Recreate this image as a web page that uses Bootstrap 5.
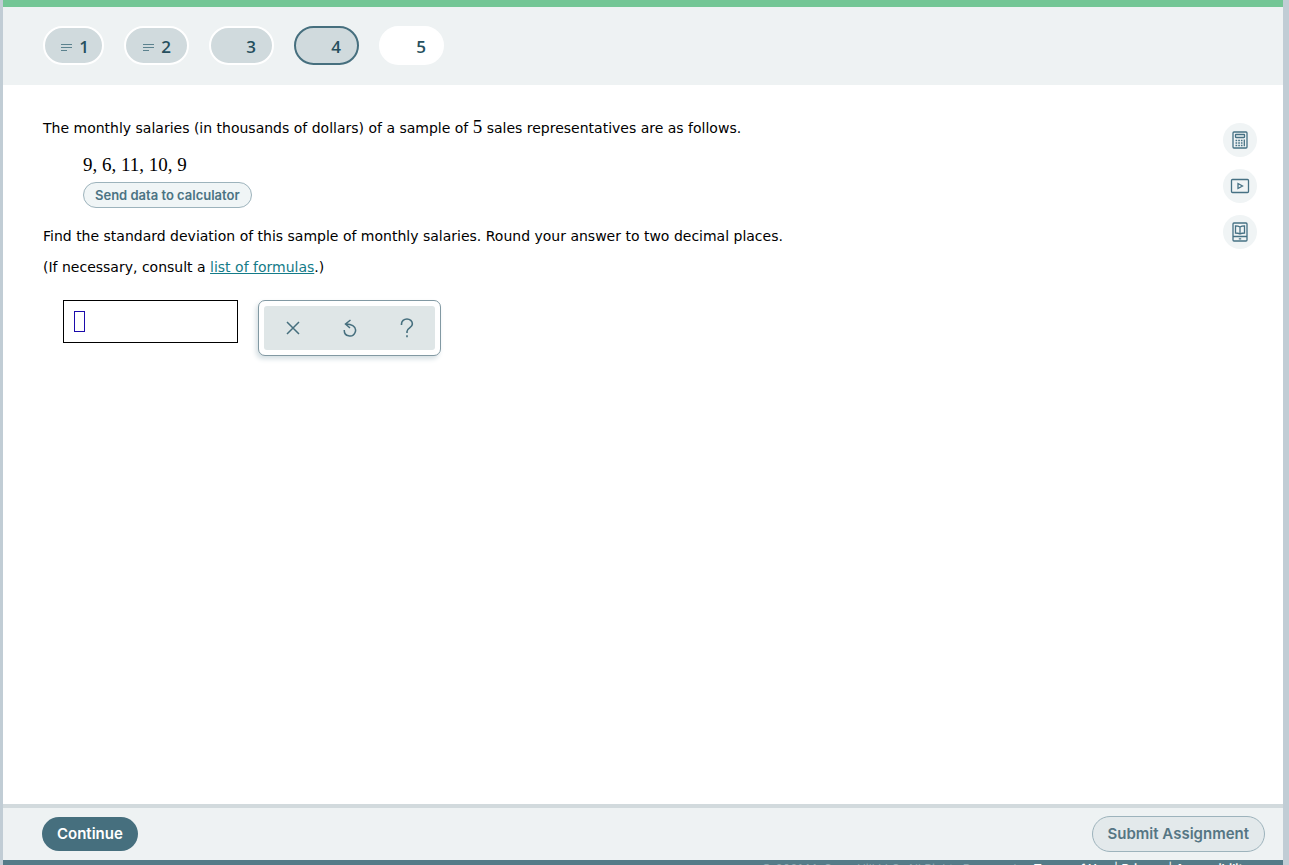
<!DOCTYPE html>
<html lang="en">
<head>
<meta charset="utf-8">
<meta name="viewport" content="width=device-width, initial-scale=1">
<title>Assignment – Question 4</title>
<link href="https://cdn.jsdelivr.net/npm/bootstrap@5.3.0/dist/css/bootstrap.min.css" rel="stylesheet">
<style>
  :root { --slate: #466f7e; --mist: #eef2f3; --frame: #c1cdd5; }
  body { font-family: "DejaVu Sans", sans-serif; font-size: 14px; line-height: 20px; color: #000; background: #fff; }
  .app-frame { border-left: 3px solid var(--frame); border-right: 6px solid var(--frame); }
  .progress-line { height: 7px; background: #73c695; }
  .question-bar { background: var(--mist); padding: 19px 40px 20px; gap: 20px; }
  .ui-font { font-family: Inter, sans-serif; }
  .question-pill { width: 65px; height: 39px; padding: 2px 16px 0 0; border: 2px solid #fff; border-radius: 20px; background: #d0dadd; color: #264f5e; font-family: "Open Sans", sans-serif; font-size: 17px; font-weight: 600; line-height: 20px; }
  .question-pill.first-pill { width: 61px; padding-right: 13px; }
  .question-pill.current { border-color: var(--slate); }
  .question-pill.unseen { background: #fff; }
  .question-pill svg { margin-right: 7px; }
  .question-area { padding: 32px 26px 0 40px; }
  .math { font-family: "Liberation Serif", serif; font-size: 19px; line-height: 20px; }
  .data-block { padding: 17px 0 18px 40px; }
  .send-btn { --bs-btn-padding-y: 0; --bs-btn-padding-x: 11px; height: 26px; margin-top: 7px; border: 1px solid #9db3bc; border-radius: 13px; background: #f0f5f6; color: #4b7383; font-size: 13px; font-weight: 600; line-height: 20px; }
  .formula-line { margin: 11px 0 0; }
  .formula-link { color: #147b88; }
  .answer-row { padding: 23px 0 0 20px; gap: 20px; }
  .answer-input { width: 175px; height: 43px; border: 1px solid #000; border-radius: 0; padding: 0 26px; }
  .answer-slot { left: 11px; top: 11px; width: 11px; height: 21px; border: 1px solid #1b0bab; pointer-events: none; }
  .tool-panel { padding: 5px; border: 1px solid #8299a3; border-radius: 7px; background: #fff; box-shadow: -2px 3px 5px #d5dfe3; }
  .tool-strip { background: #dfe6e7; border-radius: 3px; }
  .tool-btn { width: 57px; height: 44px; padding: 0; border: 0; background: transparent; color: var(--slate); }
  .side-tools { padding-top: 6px; gap: 12px; }
  .side-btn { width: 34px; height: 34px; padding: 0; border: 0; border-radius: 50%; background: #f0f4f5; color: #467184; }
  .action-bar { border-top: 4px solid #d2dadd; background: var(--mist); padding: 8px 18px 8px 39px; }
  .main-btn { height: 34px; padding: 0 15px; border: 0; border-radius: 17px; background: var(--slate); color: #fff; font-size: 15px; font-weight: 600; line-height: 20px; }
  .submit-btn { height: 36px; padding: 0 15px; border: 1px solid #9db3bc; border-radius: 18px; background: #e3e9eb; color: #557684; font-size: 15px; font-weight: 600; line-height: 20px; }
  .legal-bar { height: 5px; background: #547b88; color: #8ba8b1; font-size: 12px; line-height: 16px; padding: 1px 33px 0 0; gap: 14px; }
  .legal-bar a { color: #fff; font-weight: 600; text-decoration: none; }
</style>
</head>
<body>
<div class="app-frame vh-100 d-flex flex-column overflow-hidden">
  <div class="progress-line flex-shrink-0"></div>
  <nav class="question-bar d-flex flex-shrink-0" aria-label="Questions">
    <button type="button" class="question-pill first-pill d-flex align-items-center justify-content-end"><svg width="11" height="8" viewBox="0 0 11 8" stroke="#5b828e" aria-hidden="true"><path d="M0 1.500h11M0 4.500h11M0 7.500h6"/></svg>1</button>
    <button type="button" class="question-pill d-flex align-items-center justify-content-end"><svg width="11" height="8" viewBox="0 0 11 8" stroke="#5b828e" aria-hidden="true"><path d="M0 1.500h11M0 4.500h11M0 7.500h6"/></svg>2</button>
    <button type="button" class="question-pill d-flex align-items-center justify-content-end">3</button>
    <button type="button" class="question-pill current d-flex align-items-center justify-content-end" aria-current="true">4</button>
    <button type="button" class="question-pill unseen d-flex align-items-center justify-content-end">5</button>
  </nav>

  <main class="question-area d-flex justify-content-between flex-grow-1">
    <div>
      <p class="mb-0">The monthly salaries (in thousands of dollars) of a sample of <span class="math">5</span> sales representatives are as follows.</p>
      <div class="data-block">
        <div class="math">9, 6, 11, 10, 9</div>
        <button type="button" class="btn send-btn ui-font d-flex align-items-center">Send data to calculator</button>
      </div>
      <p class="mb-0">Find the standard deviation of this sample of monthly salaries. Round your answer to two decimal places.</p>
      <p class="formula-line">(If necessary, consult a <a href="#" class="formula-link">list of formulas</a>.)</p>
      <div class="answer-row d-flex align-items-start">
        <div class="position-relative">
          <input type="text" class="answer-input d-block" aria-label="Answer">
          <span class="answer-slot position-absolute"></span>
        </div>
        <div class="tool-panel">
          <div class="tool-strip d-flex">
            <button type="button" class="tool-btn d-flex align-items-center justify-content-center" aria-label="Clear"><svg width="14" height="14" viewBox="0 0 14 14" fill="none" stroke="currentColor" stroke-width="1.500"><path d="M1 1l12 12M13 1L1 13"/></svg></button>
            <button type="button" class="tool-btn d-flex align-items-center justify-content-center" aria-label="Undo"><svg width="16" height="18" viewBox="0 0 16 18" fill="none" stroke="currentColor" stroke-width="1.500"><path d="M8.500 1L3.500 5l4.500 4M4 5c3.500.2 5 .6 6.800 1.600A5.600 5.600 0 1 1 2.300 11"/></svg></button>
            <button type="button" class="tool-btn d-flex align-items-center justify-content-center" aria-label="Help"><svg width="14" height="20" viewBox="0 0 14 20" fill="none" stroke="currentColor" stroke-width="1.600"><path d="M1.500 7V6a5.400 5 0 0 1 10.900 0c0 4-5.400 3.700-5.400 7.500v1.500M7 17.200v2"/></svg></button>
          </div>
        </div>
      </div>
    </div>
    <aside class="side-tools d-flex flex-column" aria-label="Tools">
      <button type="button" class="side-btn d-flex align-items-center justify-content-center" aria-label="Calculator"><svg width="16" height="18" viewBox="0 0 16 18" fill="none" stroke="currentColor" stroke-width="1.300"><rect x="1" y="1" width="14" height="16" rx="1"/><rect x="3.500" y="3.500" width="9" height="3" rx=".5"/><path d="M3.500 9.500h7M3.500 12h7M3.500 14.500h7" stroke-width="1.500" stroke-dasharray="1.700 1"/><path d="M12.300 8.500v6.700"/></svg></button>
      <button type="button" class="side-btn d-flex align-items-center justify-content-center" aria-label="Video"><svg width="20" height="16" viewBox="0 0 20 16" fill="none" stroke="currentColor" stroke-width="1.300"><rect x="1.500" y="1.500" width="17" height="13" rx="1"/><path d="M8 5.500v5L12.500 8z"/></svg></button>
      <button type="button" class="side-btn d-flex align-items-center justify-content-center" aria-label="eBook"><svg width="16" height="20" viewBox="0 0 16 20" fill="none" stroke="currentColor" stroke-width="1.300"><rect x="1" y="1" width="14" height="18" rx="1"/><path d="M1 14.500h14M8 5v7M8 5C6.500 4 5 3.800 3.500 3.800v7.200C5 11 6.500 11.200 8 12c1.500-.8 3-1 4.500-1V3.800C11 3.800 9.500 4 8 5zM6.800 16.800h2.400"/></svg></button>
    </aside>
  </main>

  <div class="action-bar ui-font d-flex justify-content-between align-items-center flex-shrink-0">
    <button type="button" class="main-btn">Continue</button>
    <button type="button" class="submit-btn">Submit Assignment</button>
  </div>
  <footer class="legal-bar ui-font d-flex justify-content-end flex-shrink-0">
    <span>© 2021 McGraw Hill LLC. All Rights Reserved.</span>
    <span class="text-white"><a href="#">Terms of Use</a> | <a href="#">Privacy</a> | <a href="#">Accessibility</a></span>
  </footer>
</div>
<script src="https://cdn.jsdelivr.net/npm/bootstrap@5.3.0/dist/js/bootstrap.bundle.min.js"></script>
</body>
</html>
